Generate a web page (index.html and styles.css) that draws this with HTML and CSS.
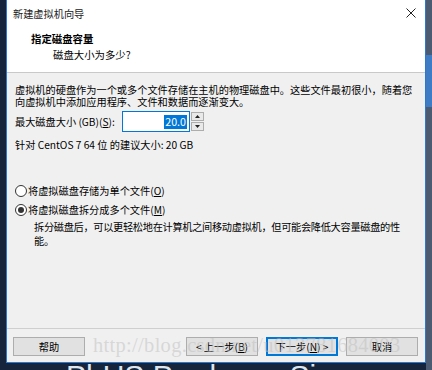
FILE: index.html
```html
<!DOCTYPE html>
<html lang="zh-CN">
<head>
<meta charset="utf-8">
<title>新建虚拟机向导</title>
<link rel="stylesheet" href="styles.css">
</head>
<body>
<div class="desk">
  <div class="win">
    <div class="titlebar">
      <span class="title">新建虚拟机向导</span>
      <svg class="close" width="10" height="10" viewBox="0 0 10 10"><path d="M0.5 0.5 L9.5 9.5 M9.5 0.5 L0.5 9.5" stroke="#222" stroke-width="1" fill="none"/></svg>
    </div>
    <div class="header">
      <div class="h1">指定磁盘容量</div>
      <div class="h2">磁盘大小为多少?</div>
    </div>
    <div class="content">
      <p class="para"><span class="ln">虚拟机的硬盘作为一个或多个文件存储在主机的物理磁盘中。这些文件最初很小，随着您</span><span class="ln">向虚拟机中添加应用程序、文件和数据而逐渐变大。</span></p>
      <div class="sizerow">
        <span class="label">最大磁盘大小 (GB)(<u>S</u>):</span>
        <span class="input"><span class="sel">20.0</span></span>
        <span class="spin">
          <span class="sbtn"><svg width="5" height="3" viewBox="0 0 5 3"><path d="M0 3 L2.5 0 L5 3 Z" fill="#222"/></svg></span>
          <span class="sbtn"><svg width="5" height="3" viewBox="0 0 5 3"><path d="M0 0 L2.5 3 L5 0 Z" fill="#222"/></svg></span>
        </span>
      </div>
      <div class="rec">针对 CentOS 7 64 位 的建议大小: 20 GB</div>
      <div class="radio r1"><span class="circle"></span><span>将虚拟磁盘存储为单个文件(<u>O</u>)</span></div>
      <div class="radio r2"><span class="circle on"></span><span>将虚拟磁盘拆分成多个文件(<u>M</u>)</span></div>
      <p class="desc"><span class="ln">拆分磁盘后，可以更轻松地在计算机之间移动虚拟机，但可能会降低大容量磁盘的性</span><span class="ln">能。</span></p>
    </div>
    <div class="footer">
      <span class="btn">帮助</span>
      <span class="spacer"></span>
      <span class="btn">&lt; 上一步(<u>B</u>)</span>
      <span class="btn def">下一步(<u>N</u>) &gt;</span>
      <span class="btn">取消</span>
    </div>
    <div class="watermark">http://blog.csdn.net/u013781684003</div>
  </div>
  <div class="desktext">PhUS Prodocoo Sig</div>
</div>
</body>
</html>
```
FILE: styles.css
```css
html, body {
  margin: 0;
  padding: 0;
}
body {
  width: 432px;
  height: 370px;
  overflow: hidden;
  background-color: #16253b;
  background-image:
    linear-gradient(#3f7cc6, #3f7cc6),
    linear-gradient(#4b5b72, #4b5b72);
  background-repeat: no-repeat;
  background-position: right 0 top 55px, right 0 top 0;
  background-size: 6px 52px, 6px 370px;
  font-family: "Noto Sans CJK SC", "Noto Sans", sans-serif;
  font-size: 10.2px;
  color: #000;
}
.desk {
  position: relative;
  width: 432px;
  height: 370px;
  overflow: hidden;
}
.win {
  position: relative;
  margin-left: 6px;
  width: 418px;
  height: 362px;
  border: 1px solid #2b78cf;
  border-top: none;
  background: #f0f0f0;
  display: flex;
  flex-direction: column;
  overflow: hidden;
}
.titlebar {
  height: 26px;
  background: #fff;
  display: flex;
  align-items: center;
  justify-content: space-between;
  padding: 0 9px 0 6px;
}
.title {
  font-size: 10.2px;
  color: #222;
}
.header {
  background: #fff;
  padding: 5px 0 9px 24px;
  border-bottom: 1px solid #c9c9c9;
}
.h1 {
  font-weight: bold;
  font-size: 10.4px;
  line-height: 16px;
}
.h2 {
  line-height: 16px;
  font-size: 10.4px;
  padding-left: 22px;
}
.content {
  flex: 1;
  padding: 11px 4px 0 8px;
}
.ln {
  display: block;
  white-space: nowrap;
}
.para {
  margin: 0;
  line-height: 12px;
}
.sizerow {
  margin-top: 3px;
  display: flex;
  align-items: center;
  height: 21px;
}
.label {
  width: 107px;
}
.input {
  box-sizing: border-box;
  width: 68px;
  height: 21px;
  background: #fff;
  border: 1px solid #0078d7;
  display: flex;
  align-items: center;
  justify-content: flex-end;
  padding-right: 2px;
}
.sel {
  background: #0078d7;
  color: #fff;
  font-size: 10.7px;
  line-height: 14px;
  padding: 0 1px;
}
.spin {
  margin-left: 1px;
  display: flex;
  flex-direction: column;
  gap: 1px;
}
.sbtn {
  box-sizing: border-box;
  width: 13px;
  height: 9px;
  border: 1px solid #adadad;
  background: #e9e9e9;
  display: flex;
  align-items: center;
  justify-content: center;
}
.rec {
  margin-top: 7px;
  line-height: 12px;
}
.radio {
  display: flex;
  align-items: center;
  height: 12px;
  line-height: 12px;
}
.r1 { margin-top: 34px; }
.r2 { margin-top: 7px; }
.circle {
  box-sizing: border-box;
  width: 12px;
  height: 12px;
  border: 1px solid #333;
  border-radius: 50%;
  background: #fff;
  margin-right: 1px;
  display: flex;
  align-items: center;
  justify-content: center;
}
.circle.on::after {
  content: "";
  width: 6px;
  height: 6px;
  border-radius: 50%;
  background: #333;
}
.desc {
  margin: 4px 0 0 19px;
  line-height: 13.5px;
  letter-spacing: -0.3px;
}
.footer {
  border-top: 1px solid #cfcfcf;
  padding: 8px 7px 6px 6px;
  display: flex;
  gap: 8px;
}
.spacer {
  flex: 1;
}
.btn {
  box-sizing: border-box;
  width: 72px;
  height: 19px;
  border: 1px solid #adadad;
  background: #e1e1e1;
  display: flex;
  align-items: center;
  justify-content: center;
}
.btn.def {
  border: 1px solid #0078d7;
  box-shadow: inset 0 0 0 1px #0078d7;
}
.watermark {
  position: absolute;
  left: 86px;
  top: 334px;
  font-family: "Liberation Serif", serif;
  font-size: 20.5px;
  letter-spacing: 0.3px;
  color: rgba(190, 190, 190, 0.5);
  white-space: nowrap;
  pointer-events: none;
}
.desktext {
  position: absolute;
  left: 66px;
  top: 361px;
  line-height: 30px;
  font-family: "Liberation Sans", sans-serif;
  font-size: 30px;
  color: #dde6ef;
  white-space: nowrap;
}
```
